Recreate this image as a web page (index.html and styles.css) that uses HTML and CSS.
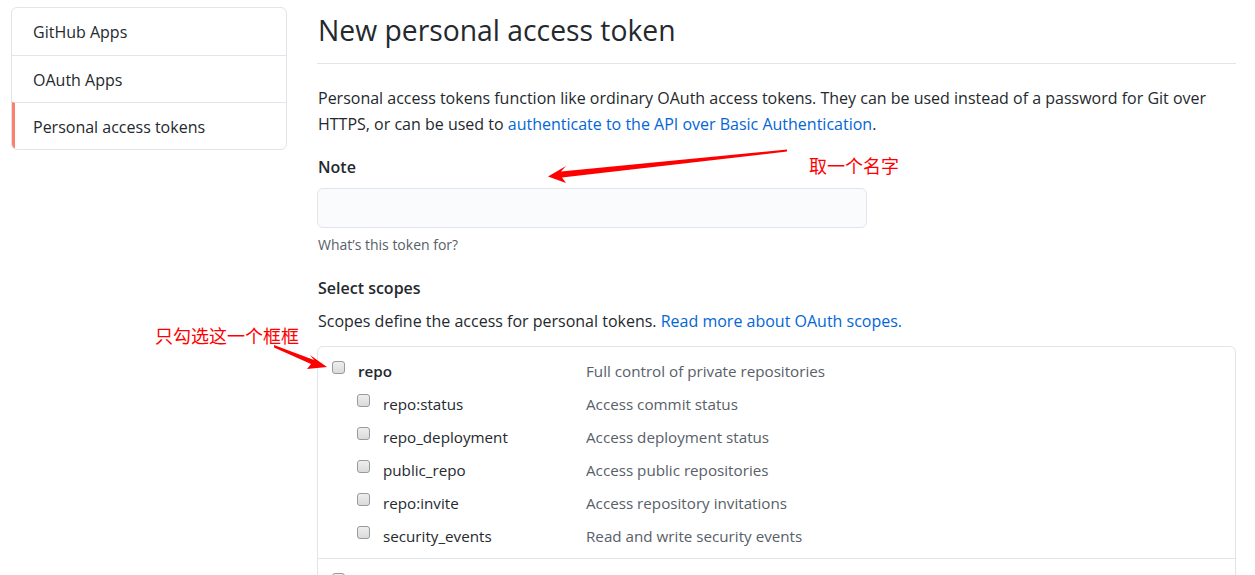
FILE: index.html
```html
<!DOCTYPE html>
<html>
<head>
<meta charset="utf-8">
<link rel="stylesheet" href="styles.css">
</head>
<body>
<div class="page">
  <nav class="sidebar">
    <a class="nav-item">GitHub Apps</a>
    <a class="nav-item">OAuth Apps</a>
    <a class="nav-item selected">Personal access tokens</a>
  </nav>
  <main class="main">
    <h2 class="title">New personal access token</h2>
    <p class="intro">Personal access tokens function like ordinary OAuth access tokens. They can be used instead of a password for Git over HTTPS, or can be used to <a class="link">authenticate to the API over Basic Authentication</a>.</p>
    <div class="field">
      <label class="field-label">Note</label>
      <div class="input"></div>
      <p class="note">What’s this token for?</p>
    </div>
    <div class="field scopes">
      <label class="field-label">Select scopes</label>
      <p class="scopes-desc">Scopes define the access for personal tokens. <a class="link">Read more about OAuth scopes.</a></p>
      <div class="scope-box">
        <div class="scope-group">
          <div class="scope-row parent">
            <span class="cb"></span><span class="scope-name bold">repo</span><span class="scope-desc">Full control of private repositories</span>
          </div>
          <div class="scope-row child">
            <span class="cb"></span><span class="scope-name">repo:status</span><span class="scope-desc">Access commit status</span>
          </div>
          <div class="scope-row child">
            <span class="cb"></span><span class="scope-name">repo_deployment</span><span class="scope-desc">Access deployment status</span>
          </div>
          <div class="scope-row child">
            <span class="cb"></span><span class="scope-name">public_repo</span><span class="scope-desc">Access public repositories</span>
          </div>
          <div class="scope-row child">
            <span class="cb"></span><span class="scope-name">repo:invite</span><span class="scope-desc">Access repository invitations</span>
          </div>
          <div class="scope-row child">
            <span class="cb"></span><span class="scope-name">security_events</span><span class="scope-desc">Read and write security events</span>
          </div>
        </div>
        <div class="scope-group next">
          <div class="scope-row parent">
            <span class="cb"></span><span class="scope-name bold">write:packages</span><span class="scope-desc">Upload packages to github package registry</span>
          </div>
        </div>
      </div>
    </div>
  </main>

  <svg class="annot-arrows" width="1255" height="575" viewBox="0 0 1255 575">
    <path d="M787 149.5 L561 171.5 L566 166 L548 176.5 L566 183 L562 177.5 L787 151.5 Z" fill="#ff0000"/>
    <path d="M274 345 L314 360 L310 355 L327 367 L307 369 L311 364 L274 347.5 Z" fill="#ff0000"/>
  </svg>
  <span class="annot annot-name">取一个名字</span>
  <span class="annot annot-check">只勾选这一个框框</span>
</div>
</body>
</html>
```

FILE: styles.css
```css
html, body {
  margin: 0;
  padding: 0;
  background: #ffffff;
}
body {
  font-family: "Open Sans", "Noto Sans", "Noto Sans CJK SC", sans-serif;
  color: #24292e;
  font-size: 15px;
  overflow: hidden;
}
.page {
  position: relative;
  display: flex;
  align-items: flex-start;
  width: 1255px;
  height: 575px;
  padding: 7px 0 0 11px;
  box-sizing: border-box;
}
.sidebar {
  width: 276px;
  flex: none;
  border: 1px solid #e1e4e8;
  border-radius: 6px;
  box-sizing: border-box;
  display: flex;
  flex-direction: column;
  overflow: hidden;
}
.nav-item {
  display: block;
  height: 47px;
  line-height: 49px;
  padding-left: 21px;
  border-top: 1px solid #e1e4e8;
  color: #24292e;
  font-size: 16px;
  box-sizing: border-box;
}
.nav-item:first-child {
  border-top: none;
}
.nav-item.selected {
  border-left: 3px solid #f9826c;
  padding-left: 18px;
}
.main {
  margin-left: 30px;
  width: 919px;
  flex: none;
}
.title {
  margin: 0;
  padding: 6px 0 15px 1px;
  font-size: 28.3px;
  font-weight: 400;
  line-height: 35px;
  border-bottom: 1px solid #e1e4e8;
}
.intro {
  margin: 21px 0 0 1px;
  font-size: 16px;
  line-height: 26px;
}
.link {
  color: #0366d6;
  text-decoration: none;
}
.field {
  margin-top: 19px;
}
.field-label {
  display: block;
  font-size: 16px;
  font-weight: 600;
  line-height: 22px;
  margin-left: 1px;
}
.input {
  margin-top: 10px;
  width: 550px;
  height: 40px;
  box-sizing: border-box;
  background: #fafbfc;
  border: 1px solid #e1e4e8;
  border-radius: 6px;
}
.note {
  margin: 7px 0 0 1px;
  font-size: 14px;
  line-height: 19px;
  color: #586069;
}
.scopes {
  margin-top: 23px;
}
.scopes-desc {
  margin: 11px 0 0 1px;
  font-size: 16px;
  line-height: 22px;
}
.scope-box {
  margin-top: 14px;
  border: 1px solid #e1e4e8;
  border-radius: 6px;
}
.scope-group {
  padding: 7px 0 6px 14px;
}
.scope-group.next {
  border-top: 1px solid #e1e4e8;
  padding-top: 9px;
}
.scope-row {
  display: flex;
  align-items: center;
  height: 33px;
  font-size: 15.2px;
}
.scope-row.child {
  padding-left: 25px;
}
.cb {
  width: 13px;
  height: 13px;
  box-sizing: border-box;
  border: 1px solid #9a9a9a;
  border-radius: 3px;
  background: linear-gradient(#eeeeee, #dadada);
  margin-right: 13px;
  flex: none;
  position: relative;
  top: -3px;
}
.next .cb {
  top: -5px;
}
.scope-name {
  color: #24292e;
}
.parent .scope-name {
  width: 228px;
}
.child .scope-name {
  width: 203px;
}
.bold {
  font-weight: 600;
}
.scope-desc {
  color: #586069;
}
.annot-arrows {
  position: absolute;
  left: 0;
  top: 0;
  pointer-events: none;
}
.annot {
  position: absolute;
  color: #ff0000;
  font-family: "Noto Sans CJK SC", sans-serif;
  font-size: 18px;
  line-height: 20px;
  white-space: nowrap;
}
.annot-name {
  left: 809px;
  top: 155px;
}
.annot-check {
  left: 155px;
  top: 325px;
}
```
